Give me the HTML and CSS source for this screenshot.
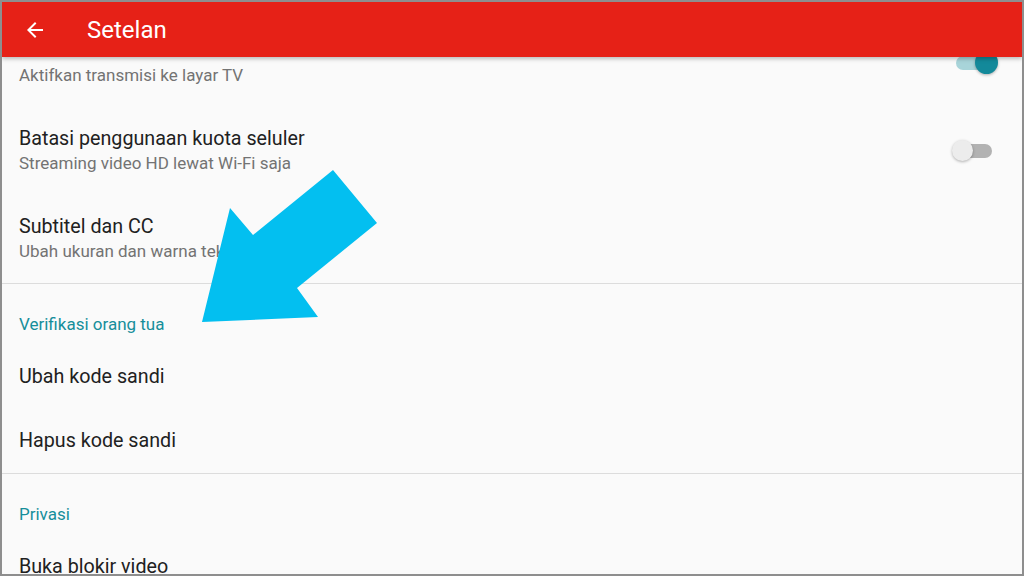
FILE: index.html
```html
<!DOCTYPE html>
<html lang="id">
<head>
  <meta charset="UTF-8">
  <meta name="viewport" content="width=device-width, initial-scale=1.0">
  <title>Setelan</title>
  <link rel="stylesheet" href="styles.css">
</head>
<body>

  <div class="layar">
    <header>
      <svg class="kembali" width="24" height="24" viewBox="0 0 24 24">
        <path d="M20 11H7.83l5.59-5.59L12 4l-8 8 8 8 1.41-1.41L7.83 13H20v-2z" fill="#fff"/>
      </svg>
      <h1>Setelan</h1>
    </header>

    <div class="daftar">
      <div class="item item-awal">
        <div class="teks">
          <div class="judul">Mode TV</div>
          <div class="sub">Aktifkan transmisi ke layar TV</div>
        </div>
        <span class="saklar nyala"></span>
      </div>

      <div class="item">
        <div class="teks">
          <div class="judul">Batasi penggunaan kuota seluler</div>
          <div class="sub">Streaming video HD lewat Wi-Fi saja</div>
        </div>
        <span class="saklar"></span>
      </div>

      <div class="item">
        <div class="teks">
          <div class="judul">Subtitel dan CC</div>
          <div class="sub">Ubah ukuran dan warna teks</div>
        </div>
      </div>

      <div class="kategori">Verifikasi orang tua</div>
      <div class="item tunggal"><div class="judul">Ubah kode sandi</div></div>
      <div class="item tunggal"><div class="judul">Hapus kode sandi</div></div>

      <div class="kategori">Privasi</div>
      <div class="item tunggal"><div class="judul">Buka blokir video</div></div>
    </div>

    <svg class="panah" width="1024" height="576" viewBox="0 0 1024 576">
      <polygon points="333,170 377,223 297,288 318,317 202,322 230,208 253,235" fill="#03bff0"/>
    </svg>
  </div>

</body>
</html>
```

FILE: styles.css
```css
body {
  margin: 0;
  padding: 0;
  font-family: Roboto, "Noto Sans", sans-serif;
  background: #fafafa;
}

.layar {
  position: relative;
  width: 1024px;
  height: 576px;
  box-sizing: border-box;
  border: 2px solid #8e8e8e;
  background: #fafafa;
  overflow: hidden;
}

header {
  position: relative;
  z-index: 2;
  height: 55px;
  background: #e62117;
  display: flex;
  align-items: center;
  box-shadow: 0 2px 4px rgba(0,0,0,0.25);
}

.kembali {
  margin-left: 21px;
}

header h1 {
  margin: 0 0 0 40px;
  font-size: 24px;
  font-weight: 400;
  color: #fff;
}

.daftar {
  margin-top: -38px;
}

.item {
  height: 88px;
  padding: 0 30px 0 17px;
  display: flex;
  align-items: center;
  justify-content: space-between;
}

.item.tunggal {
  height: 64px;
}

.item + .kategori {
  border-top: 1px solid #dcdcdc;
}

.judul {
  font-size: 19.7px;
  color: #212121;
  line-height: 24px;
}

.sub {
  font-size: 17px;
  color: #737373;
  line-height: 24px;
}

.kategori {
  padding: 30px 17px 11px;
  font-size: 17px;
  line-height: 20px;
  color: #168e9a;
}

.saklar {
  position: relative;
  width: 36px;
  height: 14px;
  border-radius: 7px;
  background: #b2b2b2;
}

.saklar::after {
  content: "";
  position: absolute;
  left: -4px;
  top: -4px;
  width: 21px;
  height: 21px;
  border-radius: 50%;
  background: #ececec;
  box-shadow: 0 1px 3px rgba(0,0,0,0.3);
}

.saklar.nyala {
  background: #a8d4d9;
}

.saklar.nyala::after {
  left: 19px;
  top: -5px;
  width: 23px;
  height: 23px;
  background: #13899a;
}

.panah {
  position: absolute;
  left: -2px;
  top: -2px;
  z-index: 3;
}
```
